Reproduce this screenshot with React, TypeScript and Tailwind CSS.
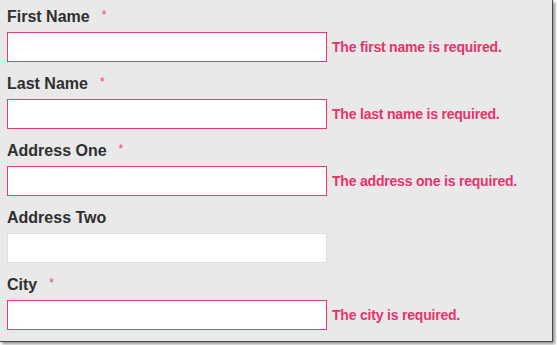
const fields = [
  { label: "First Name", required: true, error: "The first name is required." },
  { label: "Last Name", required: true, error: "The last name is required." },
  { label: "Address One", required: true, error: "The address one is required." },
  { label: "Address Two", required: false, error: "" },
  { label: "City", required: true, error: "The city is required." },
];

export default function App() {
  return (
    <div className="w-[557px] h-[345px] bg-white">
      <div className="w-[553px] h-[342px] bg-[#e9e9e9] border-r border-b border-[#4a4a4a] shadow-[2px_2px_3px_rgba(0,0,0,0.45)] pt-[7px] pl-[7px] font-['Liberation_Sans',Arial,sans-serif]">
        {fields.map((f) => (
          <div key={f.label} className="mb-[12px]">
            <div className="flex items-start h-[20px] leading-[20px] text-[16px] font-bold text-[#2f2f2f] mb-[5px]">
              {f.label}
              {f.required && (
                <span className="ml-[12px] mt-[1px] text-[12px] leading-[14px] text-[#ee4466] font-normal">*</span>
              )}
            </div>
            <div className="flex items-center">
              <input
                className={
                  f.error
                    ? "w-[320px] h-[30px] bg-white border border-[#e8386c] outline-none"
                    : "w-[320px] h-[30px] bg-white border border-[#dedede] outline-none"
                }
              />
              {f.error && (
                <span className="ml-[5px] text-[14px] font-bold text-[#e8336a] tracking-[-0.2px]">
                  {f.error}
                </span>
              )}
            </div>
          </div>
        ))}
      </div>
    </div>
  );
}
